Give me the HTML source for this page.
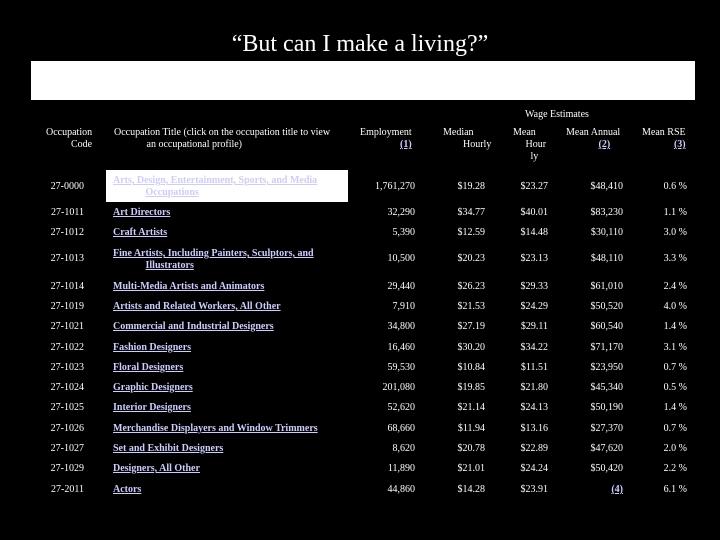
<!DOCTYPE html>
<html><head><style>
body{margin:0;width:720px;height:540px;background:#000;color:#fff;font-family:"Liberation Serif",serif;font-size:10px;position:relative;overflow:hidden}
div{position:absolute;white-space:nowrap}
.t{font-size:24px;left:0;width:720px;text-align:center;top:31px}
.bar{left:31px;top:61px;width:664px;height:39px;background:#fff}
.wb{left:106px;top:170px;width:242px;height:32px;background:#fff}
a{color:#ccccff;text-decoration:underline;font-weight:bold}
.c{left:30px;width:54px;text-align:right}
.n{left:113px}
.e{right:305px}.m{right:235px}.h{right:172px}.a{right:97px}.r{right:33px}
</style></head><body>
<div class="t">“But can I make a living?”</div>
<div class="bar"></div>
<div style="left:525px;top:109px">Wage Estimates</div>
<div style="left:46px;top:127px;text-align:right;line-height:12px">Occupation<br>Code</div>
<div style="left:114px;top:127px;line-height:12px">Occupation Title (click on the occupation title to view<br>&nbsp;&nbsp;&nbsp;&nbsp;&nbsp;&nbsp;&nbsp;&nbsp;&nbsp;&nbsp;&nbsp;&nbsp;&nbsp;an occupational profile)</div>
<div style="left:360px;top:127px;line-height:12px;text-align:right">Employment<br><a>(1)</a></div>
<div style="left:443px;top:127px;line-height:12px">Median<br>&nbsp;&nbsp;&nbsp;&nbsp;&nbsp;&nbsp;&nbsp;&nbsp;Hourly</div>
<div style="left:513px;top:127px;line-height:12px">Mean<br>&nbsp;&nbsp;&nbsp;&nbsp;&nbsp;Hour<br>&nbsp;&nbsp;&nbsp;&nbsp;&nbsp;&nbsp;&nbsp;ly</div>
<div style="left:566px;top:127px;line-height:12px;text-align:right">Mean Annual<br><a>(2)</a>&nbsp;&nbsp;&nbsp;&nbsp;</div>
<div style="left:642px;top:127px;line-height:12px;text-align:right">Mean RSE<br><a>(3)</a></div>
<div class="wb"></div>
<div class="c" style="top:181px">27-0000</div><div class="n" style="top:175px;line-height:12px"><a>Arts, Design, Entertainment, Sports, and Media</a><br>&nbsp;&nbsp;&nbsp;&nbsp;&nbsp;&nbsp;&nbsp;&nbsp;&nbsp;&nbsp;&nbsp;&nbsp;&nbsp;<a>Occupations</a></div>
<div class="e" style="top:181px">1,761,270</div><div class="m" style="top:181px">$19.28</div><div class="h" style="top:181px">$23.27</div><div class="a" style="top:181px">$48,410</div><div class="r" style="top:181px">0.6 %</div>

<div class="c" style="top:207px">27-1011</div><div class="n" style="top:207px"><a>Art Directors</a></div><div class="e" style="top:207px">32,290</div><div class="m" style="top:207px">$34.77</div><div class="h" style="top:207px">$40.01</div><div class="a" style="top:207px">$83,230</div><div class="r" style="top:207px">1.1 %</div>

<div class="c" style="top:227px">27-1012</div><div class="n" style="top:227px"><a>Craft Artists</a></div><div class="e" style="top:227px">5,390</div><div class="m" style="top:227px">$12.59</div><div class="h" style="top:227px">$14.48</div><div class="a" style="top:227px">$30,110</div><div class="r" style="top:227px">3.0 %</div>

<div class="c" style="top:253px">27-1013</div><div class="n" style="top:248px;line-height:12px"><a>Fine Artists, Including Painters, Sculptors, and</a><br>&nbsp;&nbsp;&nbsp;&nbsp;&nbsp;&nbsp;&nbsp;&nbsp;&nbsp;&nbsp;&nbsp;&nbsp;&nbsp;<a>Illustrators</a></div><div class="e" style="top:253px">10,500</div><div class="m" style="top:253px">$20.23</div><div class="h" style="top:253px">$23.13</div><div class="a" style="top:253px">$48,110</div><div class="r" style="top:253px">3.3 %</div>

<div class="c" style="top:281px">27-1014</div><div class="n" style="top:281px"><a>Multi-Media Artists and Animators</a></div><div class="e" style="top:281px">29,440</div><div class="m" style="top:281px">$26.23</div><div class="h" style="top:281px">$29.33</div><div class="a" style="top:281px">$61,010</div><div class="r" style="top:281px">2.4 %</div>

<div class="c" style="top:301px">27-1019</div><div class="n" style="top:301px"><a>Artists and Related Workers, All Other</a></div><div class="e" style="top:301px">7,910</div><div class="m" style="top:301px">$21.53</div><div class="h" style="top:301px">$24.29</div><div class="a" style="top:301px">$50,520</div><div class="r" style="top:301px">4.0 %</div>

<div class="c" style="top:321px">27-1021</div><div class="n" style="top:321px"><a>Commercial and Industrial Designers</a></div><div class="e" style="top:321px">34,800</div><div class="m" style="top:321px">$27.19</div><div class="h" style="top:321px">$29.11</div><div class="a" style="top:321px">$60,540</div><div class="r" style="top:321px">1.4 %</div>

<div class="c" style="top:342px">27-1022</div><div class="n" style="top:342px"><a>Fashion Designers</a></div><div class="e" style="top:342px">16,460</div><div class="m" style="top:342px">$30.20</div><div class="h" style="top:342px">$34.22</div><div class="a" style="top:342px">$71,170</div><div class="r" style="top:342px">3.1 %</div>

<div class="c" style="top:362px">27-1023</div><div class="n" style="top:362px"><a>Floral Designers</a></div><div class="e" style="top:362px">59,530</div><div class="m" style="top:362px">$10.84</div><div class="h" style="top:362px">$11.51</div><div class="a" style="top:362px">$23,950</div><div class="r" style="top:362px">0.7 %</div>

<div class="c" style="top:382px">27-1024</div><div class="n" style="top:382px"><a>Graphic Designers</a></div><div class="e" style="top:382px">201,080</div><div class="m" style="top:382px">$19.85</div><div class="h" style="top:382px">$21.80</div><div class="a" style="top:382px">$45,340</div><div class="r" style="top:382px">0.5 %</div>

<div class="c" style="top:402px">27-1025</div><div class="n" style="top:402px"><a>Interior Designers</a></div><div class="e" style="top:402px">52,620</div><div class="m" style="top:402px">$21.14</div><div class="h" style="top:402px">$24.13</div><div class="a" style="top:402px">$50,190</div><div class="r" style="top:402px">1.4 %</div>

<div class="c" style="top:423px">27-1026</div><div class="n" style="top:423px"><a>Merchandise Displayers and Window Trimmers</a></div><div class="e" style="top:423px">68,660</div><div class="m" style="top:423px">$11.94</div><div class="h" style="top:423px">$13.16</div><div class="a" style="top:423px">$27,370</div><div class="r" style="top:423px">0.7 %</div>

<div class="c" style="top:443px">27-1027</div><div class="n" style="top:443px"><a>Set and Exhibit Designers</a></div><div class="e" style="top:443px">8,620</div><div class="m" style="top:443px">$20.78</div><div class="h" style="top:443px">$22.89</div><div class="a" style="top:443px">$47,620</div><div class="r" style="top:443px">2.0 %</div>

<div class="c" style="top:463px">27-1029</div><div class="n" style="top:463px"><a>Designers, All Other</a></div><div class="e" style="top:463px">11,890</div><div class="m" style="top:463px">$21.01</div><div class="h" style="top:463px">$24.24</div><div class="a" style="top:463px">$50,420</div><div class="r" style="top:463px">2.2 %</div>

<div class="c" style="top:484px">27-2011</div><div class="n" style="top:484px"><a>Actors</a></div><div class="e" style="top:484px">44,860</div><div class="m" style="top:484px">$14.28</div><div class="h" style="top:484px">$23.91</div><div class="a" style="top:484px"><a>(4)</a></div><div class="r" style="top:484px">6.1 %</div>
</body></html>
